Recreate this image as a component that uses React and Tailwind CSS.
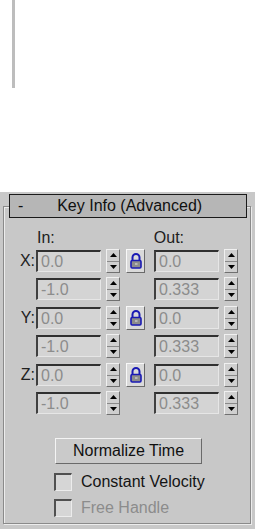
import React from "react";

const FONT = { fontFamily: '"Liberation Sans", Arial, sans-serif' };

function Field({ value }) {
  return (
    <div className="w-[65px] h-[22px] bg-[#d4d4d4] border-t-2 border-l-2 border-t-[#303030] border-l-[#404040] border-b border-r border-b-[#e6e6e6] border-r-[#e6e6e6] flex items-center pl-[3px] text-[16px] leading-none text-[#8c8c8c]">
      {value}
    </div>
  );
}

function Spinner() {
  return (
    <div className="w-[14px] h-[24px] flex flex-col border border-t-[#f0f0f0] border-l-[#f0f0f0] border-b-[#707070] border-r-[#707070] bg-[#cfcfcf]">
      <div className="flex-1 flex items-center justify-center border-b border-[#8a8a8a]">
        <svg width="7" height="4" viewBox="0 0 7 4">
          <path d="M3.5 0 L7 4 L0 4 Z" fill="#000" />
        </svg>
      </div>
      <div className="flex-1 flex items-center justify-center">
        <svg width="7" height="4" viewBox="0 0 7 4">
          <path d="M0 0 L7 0 L3.5 4 Z" fill="#000" />
        </svg>
      </div>
    </div>
  );
}

function Lock() {
  return (
    <div className="w-[19px] h-[24px] bg-[#dadada] border border-t-[#f8f8f8] border-l-[#f8f8f8] border-b-[#6a6a6a] border-r-[#6a6a6a] flex items-center justify-center">
      <svg width="12" height="16" viewBox="0 0 12 16">
        <path d="M2.5 8 V4.5 A3.5 3.5 0 0 1 9.5 4.5 V8" fill="none" stroke="#1a1ab4" strokeWidth="2" />
        <rect x="1" y="7.5" width="10" height="7.5" rx="1.2" fill="#8c8c8c" stroke="#1a1ab4" strokeWidth="1.6" />
        <rect x="5" y="10" width="2.5" height="2" fill="#b8b8b8" />
      </svg>
    </div>
  );
}

function Row({ label, inVal, outVal, lock }) {
  return (
    <div className="flex items-center h-[24px]">
      <div className="w-[32px] pr-[1px] text-right text-[16px] text-[#202020]">{label}</div>
      <Field value={inVal} />
      <div className="ml-[5px]">
        <Spinner />
      </div>
      <div className="ml-[6px] w-[19px]">{lock && <Lock />}</div>
      <div className="ml-[9px]">
        <Field value={outVal} />
      </div>
      <div className="ml-[5px]">
        <Spinner />
      </div>
    </div>
  );
}

function Check({ label, disabled }) {
  return (
    <div className="flex items-center h-[18px] ml-[50px]">
      <div className="w-[18px] h-[18px] bg-[#d6d6d6] border-t-2 border-l-2 border-t-[#505050] border-l-[#505050] border-b border-r border-b-[#ececec] border-r-[#ececec]" />
      <span className={"ml-[9px] text-[16px] " + (disabled ? "text-[#8c8c8c]" : "text-[#141414]")}>{label}</span>
    </div>
  );
}

export default function App() {
  return (
    <div className="w-[255px] h-[529px] bg-white overflow-hidden" style={FONT}>
      <div className="h-[192px]">
        <div className="ml-[12px] w-[3px] h-[88px] bg-[#bdbdbd]" />
      </div>

      <div className="h-[337px] bg-[#c8c8c8] pt-[2px]">
        <div className="relative z-10 ml-[9px] w-[238px] h-[24px] border border-[#1a1a1a] bg-[#b6b6b6] flex items-center text-[16px] text-[#101010]">
          <span className="ml-[8px]">-</span>
          <span className="flex-1 text-center pr-[10px]">Key Info (Advanced)</span>
        </div>

        <div className="-mt-[12px] ml-[3px] w-[248px] h-[318px] border border-[#8a8a8a] shadow-[inset_1px_1px_0_#ececec,1px_1px_0_#ececec] pt-[12px]">
          <div className="flex text-[16px] text-[#202020] h-[20px] items-center mt-[9px]">
            <span className="ml-[33px]">In:</span>
            <span className="ml-[99px]">Out:</span>
          </div>
          <div className="flex flex-col mt-[1px]">
            <Row label="X:" inVal="0.0" outVal="0.0" lock />
            <div className="mt-[4px]">
              <Row label="" inVal="-1.0" outVal="0.333" />
            </div>
            <div className="mt-[5px]">
              <Row label="Y:" inVal="0.0" outVal="0.0" lock />
            </div>
            <div className="mt-[4px]">
              <Row label="" inVal="-1.0" outVal="0.333" />
            </div>
            <div className="mt-[5px]">
              <Row label="Z:" inVal="0.0" outVal="0.0" lock />
            </div>
            <div className="mt-[4px]">
              <Row label="" inVal="-1.0" outVal="0.333" />
            </div>
          </div>

          <button className="block mt-[23px] ml-[51px] w-[147px] h-[26px] bg-[#cacaca] border border-t-[#f4f4f4] border-l-[#f4f4f4] border-b-[#6a6a6a] border-r-[#6a6a6a] text-[16px] text-[#101010]">
            Normalize Time
          </button>

          <div className="mt-[9px]">
            <Check label="Constant Velocity" />
          </div>
          <div className="mt-[8px]">
            <Check label="Free Handle" disabled />
          </div>
        </div>
      </div>
    </div>
  );
}
